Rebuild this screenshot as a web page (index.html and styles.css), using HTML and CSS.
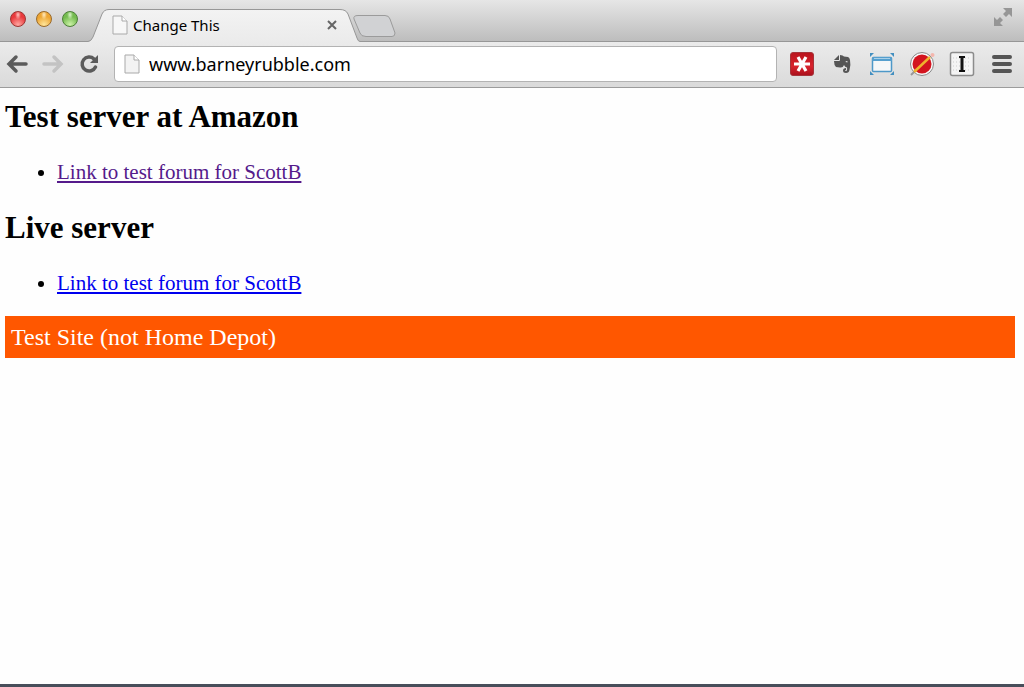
FILE: index.html
```html
<!DOCTYPE html>
<html lang="en">
<head>
    <meta charset="UTF-8">
    <meta name="viewport" content="width=device-width, initial-scale=1.0">
    <title>Change This</title>
    <link rel="stylesheet" href="styles.css">
</head>
<body>
    <div class="window">
        <header class="tab-strip">
            <div class="lights">
                <button class="light red" aria-label="Close window"></button>
                <button class="light yellow" aria-label="Minimize window"></button>
                <button class="light green" aria-label="Zoom window"></button>
            </div>
            <div class="tab">
                <svg class="tab-shape" viewBox="0 0 272 33" aria-hidden="true">
                    <defs>
                        <linearGradient id="tabFill" x1="0" y1="0" x2="0" y2="1">
                            <stop offset="0" stop-color="#f3f3f3"/>
                            <stop offset="1" stop-color="#ebebeb"/>
                        </linearGradient>
                    </defs>
                    <path d="M0 33V32.500Q3 32.500 5 28L14 5Q16 .500 21 .500H252Q258 .500 260 5L269 29Q270 32.500 272 32.500V33Z" fill="url(#tabFill)"/>
                    <path d="M0 32.500Q3 32.500 5 28L14 5Q16 .500 21 .500H252Q258 .500 260 5L269 29Q270 32.500 272 32.500" fill="none" stroke="#979797"/>
                </svg>
                <svg class="page-icon" viewBox="0 0 16 20" aria-hidden="true">
                    <path d="M1 1H10L15 6V19H1Z" fill="#f7f7f7" stroke="#a9a9a9"/>
                    <path d="M10 1V6H15" fill="#fff" stroke="#a9a9a9"/>
                </svg>
                <span class="tab-title">Change This</span>
                <button class="tab-close" aria-label="Close tab">
                    <svg viewBox="0 0 10 10"><path d="M1 1L9 9M9 1L1 9" stroke="#666" stroke-width="2"/></svg>
                </button>
            </div>
            <button class="new-tab" aria-label="New tab">
                <svg viewBox="0 0 43 22"><path d="M5 .500H32Q36 .500 37 4L42 18Q42 21.500 39 21.500H13Q8 21.500 7 18L1 4Q0 .500 5 .500Z" fill="#d1d2d4" stroke="#9b9b9b"/></svg>
            </button>
            <button class="fullscreen" aria-label="Full screen">
                <svg viewBox="0 0 20 20">
                    <path d="M10 1H19V10L16 7L13 10L10 7L13 4Z" fill="#969696"/>
                    <path d="M1 10L4 13L7 10L10 13L7 16L10 19H1Z" fill="#969696"/>
                </svg>
            </button>
        </header>

        <nav class="toolbar">
            <button class="nav-btn" aria-label="Back">
                <svg viewBox="0 0 22 20"><path d="M20 10H4M10 3L3 10L10 17" fill="none" stroke="#5b5b5b" stroke-width="3.500" stroke-linecap="round"/></svg>
            </button>
            <button class="nav-btn" aria-label="Forward">
                <svg viewBox="0 0 22 20"><path d="M2 10H18M12 3L19 10L12 17" fill="none" stroke="#c3c3c3" stroke-width="3.500" stroke-linecap="round"/></svg>
            </button>
            <button class="nav-btn" aria-label="Reload">
                <svg viewBox="0 0 22 20">
                    <path d="M16 5A7 7 0 1 0 17.500 13" fill="none" stroke="#5b5b5b" stroke-width="3.500" stroke-linecap="round"/>
                    <path d="M20 1V9H12Z" fill="#5b5b5b"/>
                </svg>
            </button>
            <div class="address">
                <svg class="page-icon" viewBox="0 0 16 20" aria-hidden="true">
                    <path d="M1 1H10L15 6V19H1Z" fill="#f3f3f3" stroke="#a9a9a9"/>
                    <path d="M10 1V6H15" fill="#fff" stroke="#a9a9a9"/>
                </svg>
                <input type="text" aria-label="Address" value="www.barneyrubble.com">
            </div>
            <div class="extensions">
                <button class="ext" aria-label="Passwords">
                    <svg viewBox="0 0 26 26">
                        <defs>
                            <linearGradient id="redFill" x1="0" y1="0" x2="0" y2="1">
                                <stop offset="0" stop-color="#b9141d"/>
                                <stop offset=".6" stop-color="#d8232d"/>
                                <stop offset="1" stop-color="#a90f1b"/>
                            </linearGradient>
                        </defs>
                        <rect x="1.500" y="1.500" width="23" height="23" rx="2.500" fill="url(#redFill)" stroke="#a5343a"/>
                        <path d="M5 13H21M9 6L17 20M17 6L9 20" stroke="#fff" stroke-width="3.200"/>
                    </svg>
                </button>
                <button class="ext" aria-label="Clipper">
                    <svg viewBox="0 0 26 26">
                        <path d="M5 9L10 4V9Z" fill="#555"/>
                        <path d="M11 4Q14 4 15 5.500L19 6Q20.500 6.500 21 9Q22 14 20.500 19Q20 22 17 22Q14 22 14 19.500Q14 17 17 17V19Q16 19 16 19.500Q16 20 17 20Q18.500 20 18 16.500Q16 16 15 14Q14 17 11 16.500L7 16Q5 14 5 10H10Q11 10 11 9Z" fill="#555"/>
                        <path d="M16.500 11Q17 9 19 11Q18 11.500 16.500 11Z" fill="#ddd"/>
                    </svg>
                </button>
                <button class="ext" aria-label="Screen capture">
                    <svg viewBox="0 0 26 26">
                        <path d="M1 2H5L1 6ZM25 2H21L25 6ZM1 24H5L1 20ZM25 24H21L25 20Z" fill="#438fc0"/>
                        <rect x="3.500" y="6.500" width="19" height="14" rx="1" fill="#f5f7f8" stroke="#4d98c8" stroke-width="1.500"/>
                        <path d="M3 8Q3 6 5 6H21Q23 6 23 8V10H3Z" fill="#559fce"/>
                        <path d="M5 7.500H21" stroke="#a9d0e8"/>
                    </svg>
                </button>
                <button class="ext" aria-label="Blocker">
                    <svg viewBox="0 0 26 26">
                        <circle cx="13" cy="13" r="11.500" fill="#f8f8f8" stroke="#888"/>
                        <circle cx="13" cy="13" r="9.500" fill="#d3141f"/>
                        <path d="M5 21L21 6" stroke="#efb32d" stroke-width="2.500"/>
                        <path d="M2 24L5 21" stroke="#999" stroke-width="2"/>
                        <circle cx="23.500" cy="4" r="2" fill="#f4b6ad"/>
                    </svg>
                </button>
                <button class="ext" aria-label="Read later">
                    <svg viewBox="0 0 26 26">
                        <rect x="1.500" y="1.500" width="23" height="23" rx="2" fill="#f4f4f4" stroke="#8c8c8c" stroke-width="1.500"/>
                        <path d="M4 7H22M4 11H22M4 15H22M4 19H22" stroke="#ccc" stroke-dasharray="1 2"/>
                        <path d="M10 5H16V7H14.500V19H16V21H10V19H11.500V7H10Z" fill="#111"/>
                    </svg>
                </button>
                <button class="ext" aria-label="Menu">
                    <svg viewBox="0 0 26 26"><path d="M5 6H21M5 13H21M5 20H21" stroke="#555" stroke-width="4" stroke-linecap="round"/></svg>
                </button>
            </div>
        </nav>

        <main class="page">
            <h2>Test server at Amazon</h2>
            <ul>
                <li><a class="visited" href="#test">Link to test forum for ScottB</a></li>
            </ul>
            <h2>Live server</h2>
            <ul>
                <li><a href="#live">Link to test forum for ScottB</a></li>
            </ul>
            <div class="banner">Test Site (not Home Depot)</div>
        </main>
    </div>
</body>
</html>
```
FILE: styles.css
```css
* {
    box-sizing: border-box;
}

body {
    margin: 0;
    background-color: #fefefe;
    color: #000;
    font-family: "Liberation Serif", "Times New Roman", serif;
}

button {
    padding: 0;
    border: none;
    background: none;
}

svg {
    display: block;
}

.window {
    display: flex;
    flex-direction: column;
    min-height: 100vh;
    border-bottom: 3px solid #484e5a;
}

/* Tab strip */
.tab-strip {
    display: flex;
    align-items: flex-end;
    height: 42px;
    background: linear-gradient(#e6e6e6, #bdbdbd);
    border-bottom: 1px solid #979797;
    font-family: "Noto Sans", "Lucida Grande", sans-serif;
}

.lights {
    display: flex;
    gap: 10px;
    width: 88px;
    padding: 0 0 14px 10px;
}

.light {
    width: 16px;
    height: 16px;
    border: 1px solid;
    border-radius: 50%;
}

.red {
    border-color: #9c3532;
    background: radial-gradient(ellipse at 50% 20%, #ffc8c4 0, transparent 30%), radial-gradient(circle at 50% 90%, #ffa6a0, #e8393c 60%);
}

.yellow {
    border-color: #9a6a2a;
    background: radial-gradient(ellipse at 50% 20%, #ffecc4 0, transparent 30%), radial-gradient(circle at 50% 90%, #ffe69a, #eda533 60%);
}

.green {
    border-color: #4b7f36;
    background: radial-gradient(ellipse at 50% 20%, #dcf5cc 0, transparent 30%), radial-gradient(circle at 50% 90%, #cdf3a8, #74bb4f 60%);
}

.tab {
    position: relative;
    display: flex;
    align-items: center;
    width: 272px;
    height: 33px;
    margin-bottom: -1px;
    padding: 0 23px 2px 24px;
}

.tab-shape {
    position: absolute;
    top: 0;
    left: 0;
    width: 272px;
    height: 33px;
}

.page-icon {
    position: relative;
    flex: none;
    width: 16px;
    height: 20px;
}

.tab-title {
    position: relative;
    flex: 1;
    margin-left: 5px;
    font-size: 15px;
}

.tab-close {
    position: relative;
    width: 10px;
    height: 10px;
}

.new-tab {
    width: 43px;
    height: 22px;
    margin: 0 0 4px -7px;
}

.fullscreen {
    width: 20px;
    height: 20px;
    margin: 0 11px 14px auto;
}

/* Toolbar */
.toolbar {
    display: flex;
    align-items: center;
    height: 46px;
    padding: 0 9px 1px 6px;
    background: linear-gradient(#ebebeb, #dadada);
    border-bottom: 1px solid #9c9c9c;
}

.nav-btn {
    width: 22px;
    height: 20px;
    margin-right: 14px;
}

.address {
    display: flex;
    flex: 1;
    align-items: center;
    height: 36px;
    padding: 0 9px;
    background-color: #fff;
    border: 1px solid #b3b3b3;
    border-radius: 4px;
}

.address input {
    flex: 1;
    min-width: 0;
    margin-left: 9px;
    padding: 0;
    border: none;
    outline: none;
    background: none;
    color: #000;
    font-family: "Noto Sans", "Lucida Grande", sans-serif;
    font-size: 18px;
}

.extensions {
    display: flex;
    gap: 14px;
    margin-left: 12px;
}

.ext {
    width: 26px;
    height: 26px;
}

/* Page content */
.page {
    flex: 1;
    padding: 10px 9px 0 5px;
}

h2 {
    margin: 0 0 21px;
    font-size: 31px;
    line-height: 38px;
}

ul {
    margin: 0 0 18px;
    padding-left: 52px;
    font-size: 21px;
    line-height: 30px;
}

ul + h2 {
    margin-top: 22px;
}

a {
    color: #0000ee;
}

a.visited {
    color: #551a8b;
}

.banner {
    padding: 6px;
    background-color: #ff5700;
    color: #fff;
    font-size: 24px;
    line-height: 30px;
}
```
